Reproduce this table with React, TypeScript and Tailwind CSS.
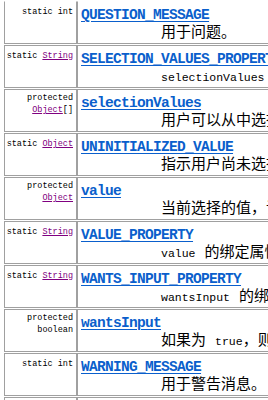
const MONO = "font-['Liberation_Mono','DejaVu_Sans_Mono',monospace]";
const CJK = "font-['Liberation_Mono','Noto_Sans_CJK_SC',monospace]";

type Part = { t: string; code?: boolean };

const ROWS: {
  mod: string[];
  type?: string;
  suffix?: string;
  name: string;
  desc: Part[];
}[] = [
  { mod: ['static int'], name: 'QUESTION_MESSAGE', desc: [{ t: '用于问题。' }] },
  { mod: ['static '], type: 'String', name: 'SELECTION_VALUES_PROPERTY', desc: [{ t: 'selectionValues', code: true }, { t: ' 的绑定属性名。' }] },
  { mod: ['protected', ''], type: 'Object', suffix: '[]', name: 'selectionValues', desc: [{ t: '用户可以从中选择值的数组。' }] },
  { mod: ['static '], type: 'Object', name: 'UNINITIALIZED_VALUE', desc: [{ t: '指示用户尚未选择值。' }] },
  { mod: ['protected', ''], type: 'Object', name: 'value', desc: [{ t: '当前选择的值，该值将是一个有效选项或者 ' }, { t: 'UNINITIALIZED_VALUE', code: true }] },
  { mod: ['static '], type: 'String', name: 'VALUE_PROPERTY', desc: [{ t: 'value', code: true }, { t: ' 的绑定属性名。' }] },
  { mod: ['static '], type: 'String', name: 'WANTS_INPUT_PROPERTY', desc: [{ t: 'wantsInput', code: true }, { t: ' 的绑定属性名。' }] },
  { mod: ['protected', 'boolean'], name: 'wantsInput', desc: [{ t: '如果为 ' }, { t: 'true', code: true }, { t: '，则向用户提供 UI 窗口小部件以获取输入。' }] },
  { mod: ['static int'], name: 'WARNING_MESSAGE', desc: [{ t: '用于警告消息。' }] },
];

function TypeLink({ t }: { t: string }) {
  return <a className="text-[#800080] underline decoration-[#800080]">{t}</a>;
}

function Row({ r, first }: { r: (typeof ROWS)[number]; first?: boolean }) {
  const twoLine = r.mod.length === 2;
  const top = first ? 'border-t-transparent' : '';
  return (
    <div className="flex h-[43px] mb-px">
      <div className={`w-[73px] shrink-0 border border-[#a0a0a0] ${top} text-right pr-[3px] ${twoLine ? 'pt-[2px]' : 'pt-[4px]'} ${MONO} text-[8.5px] font-medium leading-[12px] text-black whitespace-nowrap`}>
        {twoLine ? (
          <>
            <div>{r.mod[0]}</div>
            <div>
              {r.mod[1]}
              {r.type && <TypeLink t={r.type} />}
              {r.suffix}
            </div>
          </>
        ) : (
          <div>
            {r.mod[0]}
            {r.type && <TypeLink t={r.type} />}
          </div>
        )}
      </div>
      <div className={`flex-1 border border-[#a0a0a0] ${top} pl-[3px] pt-[4px] whitespace-nowrap`}>
        <div className={`${MONO} font-bold text-[14.5px] tracking-[-0.7px] leading-[18px]`}>
          <a className="text-[#0a5fcc] underline decoration-[#0a5fcc] underline-offset-[2px]">{r.name}</a>
        </div>
        <div className={`pl-[80px] mt-px ${CJK} text-[15px] leading-[18px] text-black`}>
          {r.desc.map((p, i) =>
            p.code ? (
              <span key={i} className={`${MONO} text-[11.5px]`}>{p.t}</span>
            ) : (
              <span key={i}>{p.t}</span>
            ),
          )}
        </div>
      </div>
    </div>
  );
}

export default function App() {
  return (
    <div className="w-[268px] h-[400px] overflow-hidden bg-white">
      <div className="w-[500px] pl-[4px] mt-px">
        {ROWS.map((r, i) => (
          <Row key={r.name} r={r} first={i === 0} />
        ))}
        <div className="flex h-[43px]">
          <div className="w-[73px] shrink-0 border border-[#a0a0a0]" />
          <div className="flex-1 border border-[#a0a0a0]" />
        </div>
      </div>
    </div>
  );
}
